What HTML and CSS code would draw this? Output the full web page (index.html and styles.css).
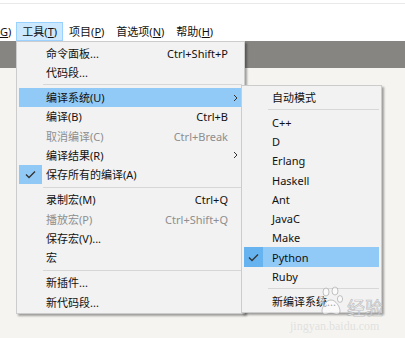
FILE: index.html
```html
<!DOCTYPE html>
<html>
<head>
<meta charset="utf-8">
<link rel="stylesheet" href="styles.css">
</head>
<body>
<div class="window">
  <div class="top"></div>
  <div class="menubar">
    <span class="mb-item first"><u>G</u>)</span>
    <span class="mb-item active">工具(<u>T</u>)</span>
    <span class="mb-item">项目(<u>P</u>)</span>
    <span class="mb-item">首选项(<u>N</u>)</span>
    <span class="mb-item">帮助(<u>H</u>)</span>
  </div>
  <div class="tabbar"></div>
  <div class="content"></div>

  <div class="menu main">
    <div class="item"><span class="check"></span><span class="label">命令面板...</span><span class="key">Ctrl+Shift+P</span><span class="arrow"></span></div>
    <div class="item"><span class="check"></span><span class="label">代码段...</span><span class="key"></span><span class="arrow"></span></div>
    <div class="sep"></div>
    <div class="item hover"><span class="check"></span><span class="label">编译系统(U)</span><span class="key"></span><span class="arrow"><svg width="5" height="8" viewBox="0 0 5 8"><path d="M1 1l3 3-3 3" fill="none" stroke="#333" stroke-width="1"/></svg></span></div>
    <div class="item"><span class="check"></span><span class="label">编译(B)</span><span class="key">Ctrl+B</span><span class="arrow"></span></div>
    <div class="item disabled"><span class="check"></span><span class="label">取消编译(C)</span><span class="key">Ctrl+Break</span><span class="arrow"></span></div>
    <div class="item"><span class="check"></span><span class="label">编译结果(R)</span><span class="key"></span><span class="arrow"><svg width="5" height="8" viewBox="0 0 5 8"><path d="M1 1l3 3-3 3" fill="none" stroke="#333" stroke-width="1"/></svg></span></div>
    <div class="item"><span class="check on"><svg width="11" height="9" viewBox="0 0 11 9"><path d="M1 4.5l3 3 6-6" fill="none" stroke="#333" stroke-width="1.3"/></svg></span><span class="label">保存所有的编译(A)</span><span class="key"></span><span class="arrow"></span></div>
    <div class="sep"></div>
    <div class="item"><span class="check"></span><span class="label">录制宏(M)</span><span class="key">Ctrl+Q</span><span class="arrow"></span></div>
    <div class="item disabled"><span class="check"></span><span class="label">播放宏(P)</span><span class="key">Ctrl+Shift+Q</span><span class="arrow"></span></div>
    <div class="item"><span class="check"></span><span class="label">保存宏(V)...</span><span class="key"></span><span class="arrow"></span></div>
    <div class="item"><span class="check"></span><span class="label">宏</span><span class="key"></span><span class="arrow"></span></div>
    <div class="sep"></div>
    <div class="item"><span class="check"></span><span class="label">新插件...</span><span class="key"></span><span class="arrow"></span></div>
    <div class="item"><span class="check"></span><span class="label">新代码段...</span><span class="key"></span><span class="arrow"></span></div>
  </div>

  <div class="menu sub">
    <div class="item"><span class="check"></span><span class="label">自动模式</span></div>
    <div class="sep"></div>
    <div class="item"><span class="check"></span><span class="label">C++</span></div>
    <div class="item"><span class="check"></span><span class="label">D</span></div>
    <div class="item"><span class="check"></span><span class="label">Erlang</span></div>
    <div class="item"><span class="check"></span><span class="label">Haskell</span></div>
    <div class="item"><span class="check"></span><span class="label">Ant</span></div>
    <div class="item"><span class="check"></span><span class="label">JavaC</span></div>
    <div class="item"><span class="check"></span><span class="label">Make</span></div>
    <div class="item hover"><span class="check on"><svg width="11" height="9" viewBox="0 0 11 9"><path d="M1 4.5l3 3 6-6" fill="none" stroke="#333" stroke-width="1.3"/></svg></span><span class="label">Python</span></div>
    <div class="item"><span class="check"></span><span class="label">Ruby</span></div>
    <div class="sep"></div>
    <div class="item"><span class="check"></span><span class="label">新编译系统...</span></div>
  </div>

  <div class="watermark">
    <svg class="wm-paw" width="26" height="30" viewBox="0 0 26 30">
      <g fill="rgba(255,255,255,0.6)" stroke="rgba(150,150,150,0.55)" stroke-width="1">
        <ellipse cx="8" cy="6" rx="3" ry="4"/>
        <ellipse cx="17" cy="5" rx="3" ry="4"/>
        <ellipse cx="3.5" cy="14" rx="2.6" ry="3.4"/>
        <ellipse cx="22" cy="13" rx="2.6" ry="3.4"/>
        <path d="M13 14c-5 0-9 7-9 11 0 3 3 4 5 3 2-1 6-1 8 0 2 1 5 0 5-3 0-4-4-11-9-11z"/>
      </g>
    </svg>
    <span class="wm-cn">经验</span>
    <span class="wm-en">jingyan.baidu.com</span>
  </div>
</div>
</body>
</html>
```

FILE: styles.css
```css
* { box-sizing: border-box; }
html, body { margin: 0; padding: 0; }
body {
  width: 405px;
  height: 338px;
  overflow: hidden;
  font-family: "Noto Sans", "Noto Sans CJK SC", sans-serif;
  font-size: 11px;
  color: #111;
}
.window {
  position: relative;
  width: 405px;
  height: 338px;
  display: flex;
  flex-direction: column;
  background: #f5f4f0;
}
.top {
  height: 22px;
  background: linear-gradient(#fff 3px, #e9e9e9 3px, #e9e9e9 4px, #fff 4px);
}
.menubar {
  height: 19px;
  background: #fff;
  display: flex;
  align-items: stretch;
}
.mb-item {
  display: flex;
  align-items: center;
  padding: 0 5px;
  border: 1px solid transparent;
  line-height: 1;
  white-space: nowrap;
}
.mb-item.first { padding: 0 4px 0 0; border-left: 0; }
.mb-item.active {
  background: #cce8ff;
  border-color: #99d1ff;
}
.mb-item u { text-decoration: underline; text-underline-offset: 1px; }
.tabbar {
  height: 27px;
  background: #868582;
}
.content {
  flex: 1;
  background: #f5f4f0;
}

/* menus */
.menu {
  position: absolute;
  background: #f2f2f2;
  border: 1px solid #cccccc;
  box-shadow: 2px 2px 2px rgba(0, 0, 0, 0.35);
  padding: 1.4px 0 1px;
}
.main {
  left: 16px;
  top: 41px;
  width: 229px;
}
.sub {
  left: 241px;
  top: 85px;
  width: 141px;
}
.item {
  height: 19.25px;
  margin: 0 2px;
  display: grid;
  align-items: center;
  white-space: nowrap;
}
.main .item { grid-template-columns: 27px 1fr auto 14px; }
.sub .item { grid-template-columns: 28px 1fr; }
.item.hover { background: #91c9f7; }
.item.disabled { color: #8e8e8e; }
.check {
  height: 19.25px;
  display: flex;
  align-items: center;
  justify-content: center;
}
.main .check { width: 23px; }
.sub .check { width: 19px; }
.check.on { background: #90c8f6; }
.item.hover .check.on { background: #66b3f0; }
.label { line-height: 1; }
.key { line-height: 1; text-align: right; }
.arrow {
  display: flex;
  align-items: center;
  justify-content: center;
  padding-left: 1px;
}
.sep {
  height: 6px;
  margin: 0 2px 0 26px;
  display: flex;
  align-items: center;
}
.sep::before {
  content: "";
  flex: 1;
  height: 1px;
  background: #d7d7d7;
}

/* watermark */
.watermark {
  position: absolute;
  left: 290px;
  top: 284px;
  width: 110px;
  height: 52px;
  pointer-events: none;
}
.wm-paw {
  position: absolute;
  left: 28px;
  top: 2px;
}
.wm-cn {
  position: absolute;
  left: 57px;
  top: 14px;
  font-family: "Noto Sans CJK SC", sans-serif;
  font-size: 18px;
  line-height: 19px;
  color: rgba(255, 255, 255, 0.7);
  -webkit-text-stroke: 0.7px rgba(150, 150, 150, 0.6);
}
.wm-en {
  position: absolute;
  left: 0;
  top: 36px;
  font-family: "Liberation Serif", serif;
  font-size: 12px;
  line-height: 13px;
  color: rgba(222, 222, 222, 0.9);
}
```
